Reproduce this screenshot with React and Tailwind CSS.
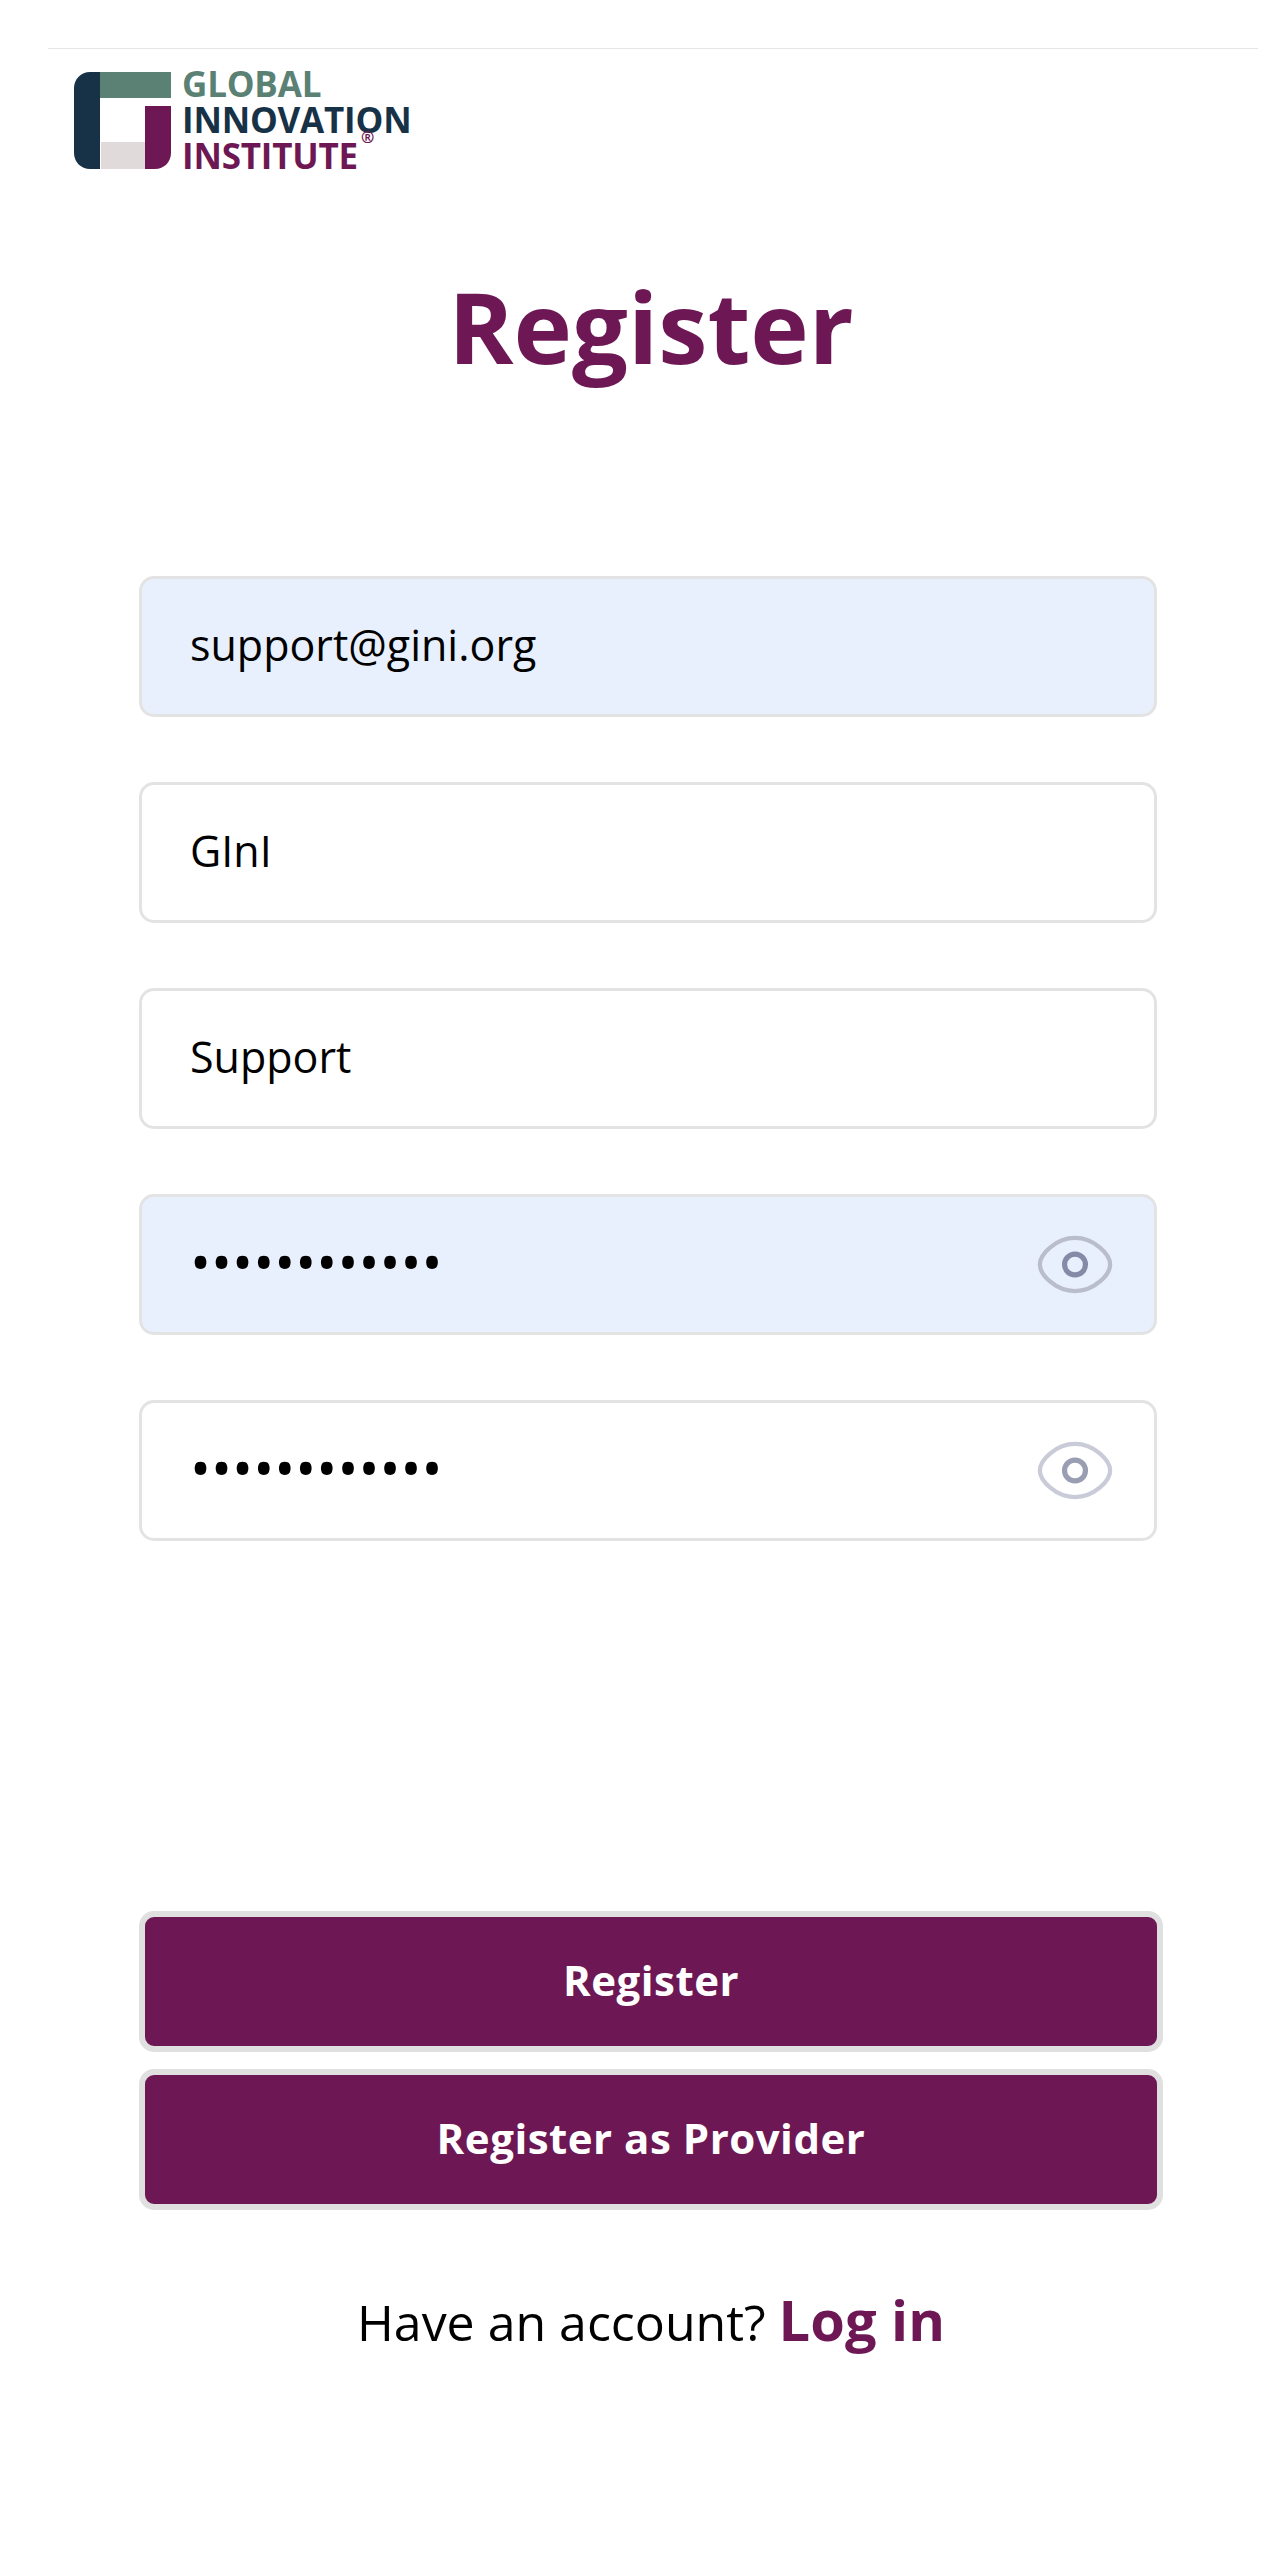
const FONT = "font-['Open_Sans','Noto_Sans',sans-serif]";

function Logo() {
  return (
    <div className="flex items-start h-[97px] ml-[26px] mt-[23px]">
      <svg width="97" height="97" viewBox="0 0 97 97" className="shrink-0">
        <path d="M26 0H16C7 0 0 7 0 16V81C0 90 7 97 16 97H26Z" fill="#173246" />
        <rect x="26" y="0" width="71" height="26" fill="#5a8173" />
        <rect x="27" y="70" width="44" height="27" fill="#e0dadb" />
        <path d="M71 34H97V81C97 90 90 97 81 97H71Z" fill="#6d1854" />
      </svg>
      <div className="ml-[11px] -mt-[6px] flex flex-col font-bold text-[35px] leading-[36px] tracking-[-0.2px]">
        <span className="text-[#5a8173]">GLOBAL</span>
        <span className="text-[#173246] relative">
          INNOVATION
          <span className="absolute left-[179px] top-[27px] text-[16px] leading-[16px] text-[#6d1854]">®</span>
        </span>
        <span className="text-[#6d1854]">INSTITUTE</span>
      </div>
    </div>
  );
}

function Eye({ light }) {
  return (
    <svg width="76" height="61" viewBox="0 0 80 64" fill="none" className="absolute right-[44px] top-[40px]">
      <path d="M3 32C3 21 20 4 40 4S77 21 77 32 60 60 40 60 3 43 3 32Z" stroke={light ? "#c9ccd8" : "#b9bdcc"} strokeWidth="4.5" />
      <circle cx="40" cy="32" r="11" stroke={light ? "#9a9eb2" : "#858ba6"} strokeWidth="5.5" />
    </svg>
  );
}

function Field({ value, type = "text", filled, eye, light }) {
  return (
    <div className="relative w-[1018px]">
      <input
        readOnly
        type={type}
        value={value}
        className={`w-[1018px] h-[141px] block rounded-[15px] border-[3px] border-[#e3e3e3] pl-[48px] pr-[130px] text-black outline-none ${FONT} ${filled ? "bg-[#e8f0fe]" : "bg-white"} ${type === "password" ? "text-[56px] pb-[7px]" : "text-[43px] pb-[4px]"}`}
      />
      {eye && <Eye light={light} />}
    </div>
  );
}

function Btn({ children }) {
  return (
    <button className="w-[1024px] h-[141px] block rounded-[15px] border-[6px] border-[#e0e0e0] bg-[#6d1854] text-white font-bold text-[42px] tracking-[0.5px] pb-[4px]">
      {children}
    </button>
  );
}

export default function App() {
  return (
    <div className={`w-[1282px] h-[2560px] bg-white overflow-hidden pt-[48px] ${FONT}`}>
      <div className="ml-[48px] mr-[24px] border-t border-[#e6e6e6]">
        <Logo />
      </div>
      <h1 className="text-center pl-[20px] font-bold text-[99px] leading-[130px] text-[#6d1854] mt-[92px]">Register</h1>
      <div className="ml-[139px] mt-[185px] flex flex-col gap-[65px]">
        <Field value="support@gini.org" filled />
        <Field value="GInI" />
        <Field value="Support" />
        <Field value="123456789012" type="password" filled eye />
        <Field value="123456789012" type="password" eye light />
      </div>
      <div className="ml-[139px] mt-[370px] flex flex-col gap-[17px]">
        <Btn>Register</Btn>
        <Btn>Register as Provider</Btn>
      </div>
      <p className="text-center pl-[20px] mt-[79px] text-[50px] leading-[60px] text-black">
        Have an account? <a className="font-bold text-[56px] text-[#6d1854]">Log in</a>
      </p>
    </div>
  );
}
